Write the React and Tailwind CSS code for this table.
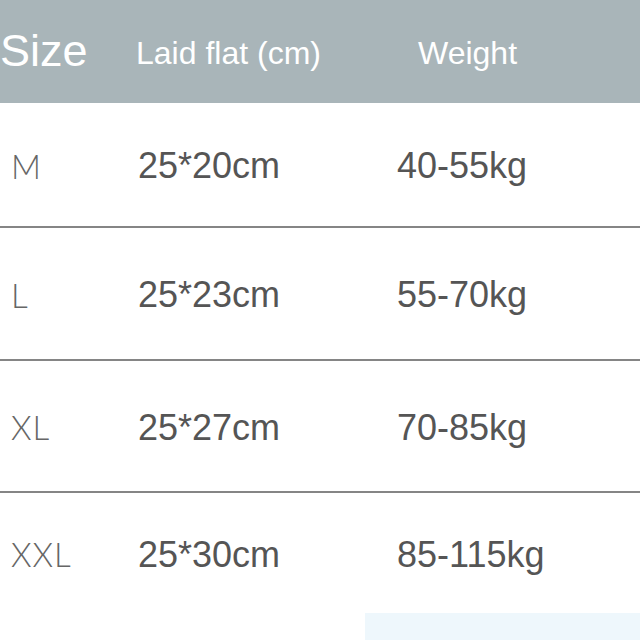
import React from "react";

const rows = [
  { s: "M", d: "25*20cm", w: "40-55kg", h: "h-[123px]" },
  { s: "L", d: "25*23cm", w: "55-70kg", h: "h-[131px]" },
  { s: "XL", d: "25*27cm", w: "70-85kg", h: "h-[130px]" },
  { s: "XXL", d: "25*30cm", w: "85-115kg", h: "h-[120px]" },
];

export default function App() {
  return (
    <div className="w-[640px] h-[640px] bg-white overflow-hidden flex flex-col font-['Liberation_Sans',Arial,sans-serif]">
      <div className="h-[103px] bg-[#a9b5b9] flex items-center text-white shrink-0">
        <div className="w-[136px] text-[45px] leading-none pb-[3px]">Size</div>
        <div className="w-[282px] text-[32px] leading-none pt-[2px]">Laid flat (cm)</div>
        <div className="text-[32px] leading-none pt-[2px]">Weight</div>
      </div>
      {rows.map((r, i) => (
        <div key={r.s} className="flex flex-col shrink-0">
          {i > 0 && <div className="h-[2px] bg-[#858585]" />}
          <div className={`${r.h} flex items-center`}>
            <div className="w-[138px] pl-[11px] text-[33px] leading-none font-light text-[#666] font-['Lato',sans-serif] tracking-[1px] pt-[3px]">
              {r.s}
            </div>
            <div className="w-[259px] text-[36px] leading-none text-[#555] pt-[3px]">{r.d}</div>
            <div className="text-[36px] leading-none text-[#555] pt-[3px]">{r.w}</div>
          </div>
        </div>
      ))}
      <div className="flex flex-1">
        <div className="w-[365px]" />
        <div className="flex-1 bg-[#eef7fc]" />
      </div>
    </div>
  );
}
